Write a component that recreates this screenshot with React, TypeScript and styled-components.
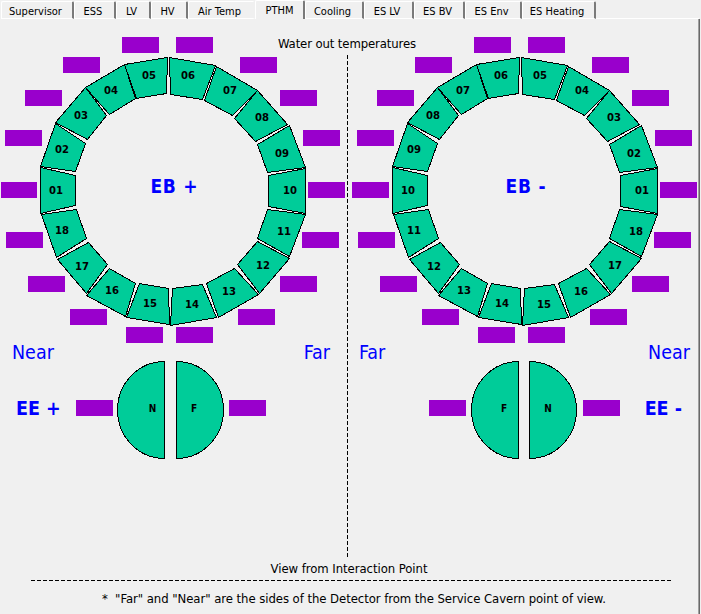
import React from "react";
import styled, { createGlobalStyle, css } from "styled-components";

const GlobalStyle = createGlobalStyle`
  * { box-sizing: border-box; }
  body {
    margin: 0;
    background: #f0f0f0;
    color: #000;
    font-family: "DejaVu Sans Condensed", "DejaVu Sans", sans-serif;
    font-stretch: condensed;
    overflow: hidden;
  }
`;

const Window = styled.main`
  width: 701px;
  height: 614px;
  display: flex;
  flex-direction: column;
  background: #f0f0f0;
`;

const TabBar = styled.nav`
  display: flex;
  align-items: flex-end;
  flex: none;
  height: 19px;
  padding-left: 1px;
`;

const Tab = styled.button<{ $w: number; $active?: boolean; $flat?: boolean }>`
  flex: none;
  width: ${(p) => p.$w}px;
  height: 18px;
  padding: 3px 3px 0 0;
  border: 0 solid;
  border-width: 1px 2px 1px 1px;
  border-color: #fff;
  border-right-color: ${(p) => (p.$flat ? "#f0f0f0" : "#7a7a7a")};
  border-radius: 2px 2px 0 0;
  background: #f0f0f0;
  color: #000;
  font: inherit;
  font-size: 11px;
  line-height: 13px;
  white-space: nowrap;
  ${(p) =>
    p.$active &&
    css`
      height: 19px;
      padding: 1px 0 0;
      border-bottom-width: 0;
    `}
`;

const TabLine = styled.div`
  flex: 1;
  height: 1px;
  margin-right: 2px;
  background: #fff;
`;

const Page = styled.section`
  flex: 1;
  display: flex;
  flex-direction: column;
  border-right: 1px solid #696969;
  box-shadow: inset -1px 0 #a0a0a0;
  margin-right: 1px;
`;

const Sides = styled.div`
  display: grid;
  grid-template-columns: 347px 1px 351px;
  grid-template-rows: 538px;
  height: 538px;
`;

const Title = styled.h1`
  grid-area: 1 / 1 / 2 / 4;
  justify-self: start;
  width: 694px;
  height: 16px;
  margin: 17px 0 0;
  text-align: center;
  font-size: 13px;
  font-weight: 400;
  letter-spacing: -0.12px;
  line-height: 16px;
`;

const Divider = styled.div`
  grid-area: 1 / 2;
  margin-top: 36px;
  background: repeating-linear-gradient(#000 0 4px, transparent 4px 6px);
`;

const SideColumn = styled.div<{ $column: number }>`
  grid-area: 1 / ${(p) => p.$column};
  display: flex;
  flex-direction: column;
`;

const Ring = styled.svg`
  display: block;
  flex: none;
  width: 100%;
  height: 311px;
  margin-top: 11px;
  overflow: visible;
`;

const Blade = styled.polygon`
  fill: #00cc99;
  stroke: #000;
  stroke-width: 1;
  shape-rendering: crispEdges;
`;

const SegmentLabel = styled.text`
  font-size: 11.2px;
  font-weight: 700;
  text-anchor: middle;
`;

const RingName = styled.text`
  fill: #00f;
  font-size: 19px;
  font-weight: 700;
`;

const Reading = styled.rect`
  fill: #9900cc;
`;

const Sectors = styled.div<{ $left: number; $right: number }>`
  display: flex;
  justify-content: space-between;
  padding: 0 ${(p) => p.$right}px 0 ${(p) => p.$left}px;
  height: 24px;
  color: #00f;
  font-size: 19.5px;
  line-height: 24px;
`;

const Endcap = styled.div<{ $left: number }>`
  display: flex;
  align-items: center;
  height: 98px;
  margin-top: -4px;
  padding-left: ${(p) => p.$left}px;
`;

const EndcapName = styled.strong<{ $w: number; $end?: boolean }>`
  flex: none;
  width: ${(p) => p.$w}px;
  margin-top: -3px;
  color: #00f;
  font-size: 19.5px;
  line-height: 24px;
  text-align: ${(p) => (p.$end ? "right" : "left")};
  white-space: nowrap;
`;

const EndcapReading = styled.div`
  flex: none;
  width: 37px;
  height: 16px;
  margin-top: -4px;
  background: #9900cc;
`;

const Halves = styled.svg<{ $left: number; $right: number }>`
  flex: none;
  height: 98px;
  margin: 0 ${(p) => p.$right}px 0 ${(p) => p.$left}px;
`;

const Half = styled.path`
  fill: #00cc99;
  stroke: #000;
  shape-rendering: crispEdges;
`;

const HalfLabel = styled.text`
  font-size: 10px;
  font-weight: 700;
  text-anchor: middle;
`;

const Caption = styled.p`
  width: 698px;
  height: 16px;
  margin: 4px 0 3px;
  text-align: center;
  font-size: 13px;
  letter-spacing: -0.06px;
  line-height: 16px;
`;

const Rule = styled.div`
  flex: none;
  width: 640px;
  height: 1px;
  margin-left: 31px;
  background: repeating-linear-gradient(90deg, #000 0 4px, transparent 4px 6px);
`;

const Footnote = styled.p`
  height: 16px;
  margin: 10px 0 0 102px;
  font-size: 13px;
  letter-spacing: -0.06px;
  line-height: 16px;
  white-space: pre;
`;

const tabs = [
  { name: "Supervisor", w: 73 },
  { name: "ESS", w: 42 },
  { name: "LV", w: 35 },
  { name: "HV", w: 37 },
  { name: "Air Temp", w: 67, flat: true },
  { name: "PTHM", w: 50, active: true },
  { name: "Cooling", w: 59 },
  { name: "ES LV", w: 50 },
  { name: "ES BV", w: 51 },
  { name: "ES Env", w: 57 },
  { name: "ES Heating", w: 74 },
];

type Segment = { points: string; label: [number, number]; tag: [number, number] };

const segments: Segment[] = [
  { points: "40.5,167.5 75.5,175.5 75.5,205.5 40.5,213.5", label: [56, 190], tag: [1, 182] },
  { points: "55.5,123.5 85.5,143.5 75.5,171.5 40.5,166.5", label: [62, 149], tag: [5, 130] },
  { points: "85.5,87.5 106.5,115.5 87.5,139.5 55.5,122.5", label: [81, 115], tag: [25, 90] },
  { points: "124.5,64.5 135.5,98.5 109.5,114.5 85.5,87.5", label: [111, 90], tag: [63, 57] },
  { points: "124.5,64.5 167.5,57.5 166.5,93.5 136.5,98.5", label: [149, 75], tag: [122, 37] },
  { points: "169.5,57.5 215.5,65.5 202.5,99.5 170.5,94.5", label: [188, 75], tag: [176, 37] },
  { points: "216.5,66.5 257.5,90.5 232.5,115.5 204.5,100.5", label: [230, 90], tag: [240, 57] },
  { points: "257.5,90.5 287.5,124.5 255.5,141.5 234.5,118.5", label: [262, 117], tag: [280, 90] },
  { points: "289.5,125.5 305.5,167.5 267.5,172.5 257.5,144.5", label: [282, 153], tag: [303, 130] },
  { points: "305.5,168.5 305.5,213.5 268.5,206.5 268.5,175.5", label: [290, 190], tag: [308, 182] },
  { points: "267.5,209.5 305.5,214.5 289.5,256.5 257.5,238.5", label: [284, 231], tag: [302, 232] },
  { points: "257.5,241.5 289.5,258.5 259.5,293.5 237.5,264.5", label: [263, 265], tag: [280, 276] },
  { points: "234.5,268.5 258.5,294.5 218.5,317.5 206.5,283.5", label: [229, 291], tag: [238, 309] },
  { points: "202.5,284.5 216.5,317.5 170.5,325.5 172.5,288.5", label: [192, 304], tag: [176, 327] },
  { points: "139.5,283.5 168.5,288.5 169.5,324.5 126.5,317.5", label: [150, 303], tag: [126, 327] },
  { points: "109.5,268.5 135.5,283.5 125.5,316.5 86.5,295.5", label: [112, 290], tag: [70, 309] },
  { points: "88.5,242.5 107.5,264.5 86.5,293.5 57.5,259.5", label: [82, 266], tag: [28, 276] },
  { points: "76.5,209.5 86.5,238.5 56.5,257.5 41.5,214.5", label: [62, 230], tag: [6, 232] },
];

const mirrored = (n: number) => (n <= 10 ? 11 - n : 29 - n);

function Barrel({ name, mirror, shift }: { name: string; mirror?: boolean; shift: number }) {
  return (
    <Ring>
      <g transform={`translate(${shift} -30)`}>
        {segments.map((s, i) => {
          const n = mirror ? mirrored(i + 1) : i + 1;
          const w = i === 0 && !mirror ? 36 : 37;
          const x = i === 0 && mirror ? 0 : s.tag[0];
          return (
            <g key={n}>
              <Blade points={s.points} />
              <Reading x={x} y={s.tag[1]} width={w} height={16} />
              <SegmentLabel x={s.label[0]} y={s.label[1] + 4}>
                {String(n).padStart(2, "0")}
              </SegmentLabel>
            </g>
          );
        })}
        <RingName x={mirror ? 153.5 : 150.5} y={193} textLength={mirror ? 40 : 47}>
          {name}
        </RingName>
      </g>
    </Ring>
  );
}

type HalfDiscsProps = {
  gap: number;
  left: number;
  right: number;
  labels: [string, string];
  labelX: [number, number];
};

function HalfDiscs({ gap, left, right, labels, labelX }: HalfDiscsProps) {
  const start = 47.5 + gap;
  return (
    <Halves $left={left} $right={right} width={96 + gap} height={98}>
      <Half d="M47.5 .5 A47 48.5 0 0 0 47.5 97.5 Z" />
      <Half d={`M${start} .5 A47 48.5 0 0 1 ${start} 97.5 Z`} />
      <HalfLabel x={labelX[0]} y={51}>{labels[0]}</HalfLabel>
      <HalfLabel x={labelX[1]} y={51}>{labels[1]}</HalfLabel>
    </Halves>
  );
}

export default function App() {
  return (
    <>
      <GlobalStyle />
      <Window>
        <TabBar>
          {tabs.map((t) => (
            <Tab key={t.name} $w={t.w} $active={t.active} $flat={t.flat}>{t.name}</Tab>
          ))}
          <TabLine />
        </TabBar>
        <Page>
          <Sides>
            <SideColumn $column={1}>
              <Barrel name="EB +" shift={0} />
              <Sectors $left={12} $right={17}>
                <span>Near</span>
                <span>Far</span>
              </Sectors>
              <Endcap $left={16}>
                <EndcapName $w={60}>EE +</EndcapName>
                <EndcapReading />
                <HalfDiscs gap={12} left={4} right={4} labels={["N", "F"]} labelX={[35.5, 77]} />
                <EndcapReading />
              </Endcap>
            </SideColumn>
            <Divider />
            <SideColumn $column={3}>
              <Barrel name="EB -" mirror shift={4} />
              <Sectors $left={11} $right={9}>
                <span>Far</span>
                <span>Near</span>
              </Sectors>
              <Endcap $left={81}>
                <EndcapReading />
                <HalfDiscs gap={11} left={5} right={5} labels={["F", "N"]} labelX={[33, 77]} />
                <EndcapReading />
                <EndcapName $w={62} $end>EE -</EndcapName>
              </Endcap>
            </SideColumn>
            <Title>Water out temperatures</Title>
          </Sides>
          <Caption>View from Interaction Point</Caption>
          <Rule />
          <Footnote>{'*  "Far" and "Near" are the sides of the Detector from the Service Cavern point of view.'}</Footnote>
        </Page>
      </Window>
    </>
  );
}
